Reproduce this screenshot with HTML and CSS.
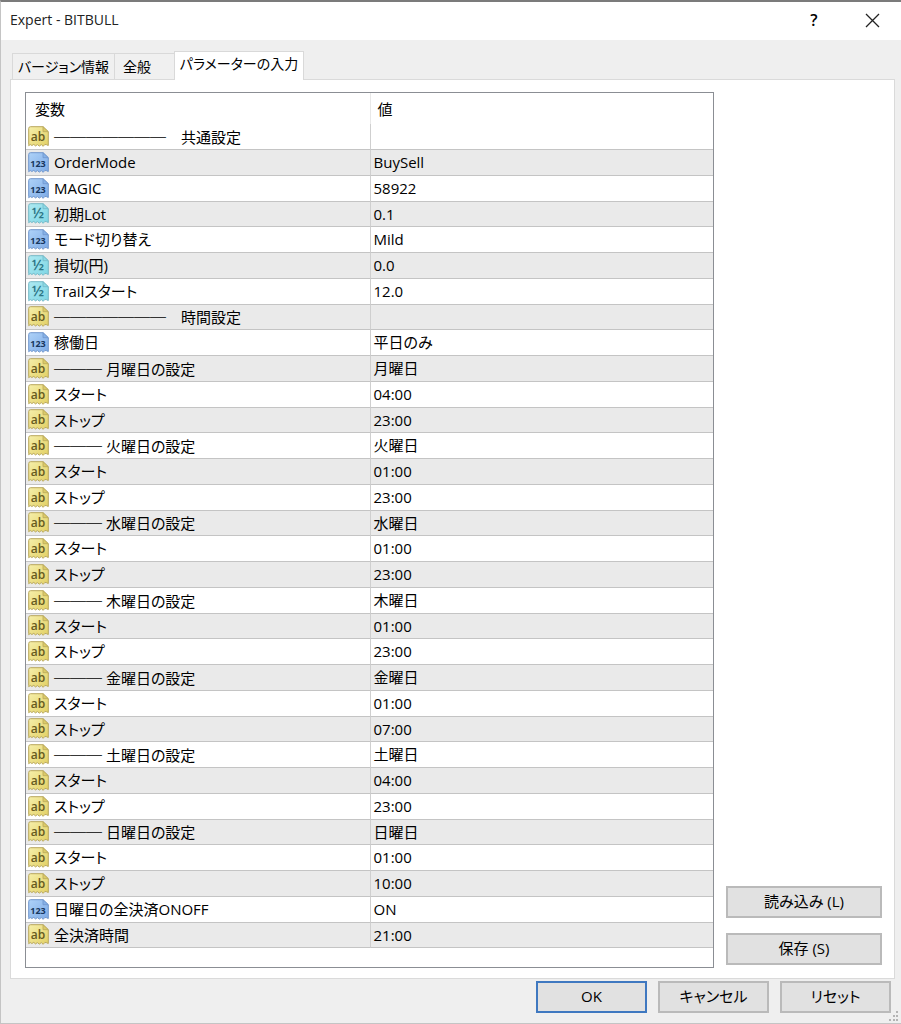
FILE: index.html
```html
<!DOCTYPE html>
<html lang="ja">
<head>
<meta charset="utf-8">
<meta name="viewport" content="width=device-width, initial-scale=1">
<title>Expert - BITBULL</title>
<link rel="stylesheet" href="styles.css">
</head>
<body>
<svg class="defs" aria-hidden="true">
  <defs>
    <linearGradient id="g-ab" x1="0" y1="0" x2="1" y2="1"><stop offset="0" stop-color="#f6efaa"/><stop offset="1" stop-color="#e2d064"/></linearGradient>
    <linearGradient id="g-int" x1="0" y1="0" x2="1" y2="1"><stop offset="0" stop-color="#aed2f8"/><stop offset="1" stop-color="#7eabe6"/></linearGradient>
    <linearGradient id="g-dbl" x1="0" y1="0" x2="1" y2="1"><stop offset="0" stop-color="#aeeaf2"/><stop offset="1" stop-color="#7ed6e4"/></linearGradient>
    <path id="sheet" d="M2.500 .7H15l5.300 5V19.500l-1.800-.8-1.700-.2-1.600 1.800-1.900-1.700-2 1.500-1.900-1.500-1.900 1.300-1.700-1.500-1.900 1.100-1.700-1-1.500 1.200L.7 18.500V2.500Q.7.7 2.500.7Z"/>
  </defs>
</svg>
<main class="dialog">
  <header class="titlebar">
    <h1 class="title">Expert - BITBULL</h1>
    <button class="caption-btn help" type="button" aria-label="ヘルプ">?</button>
    <button class="caption-btn" type="button" aria-label="閉じる">
      <svg width="15" height="15" viewBox="0 0 15 15" fill="none" stroke="#222" stroke-width="1.300"><path d="M1 1l13 13M14 1L1 14"/></svg>
    </button>
  </header>
  <div class="tabs" role="tablist">
    <button class="tab" type="button" role="tab" aria-selected="false">バージョン情報</button>
    <button class="tab tab-general" type="button" role="tab" aria-selected="false">全般</button>
    <button class="tab active" type="button" role="tab" aria-selected="true">パラメーターの入力</button>
  </div>
  <section class="panel" role="tabpanel">
    <div class="list">
      <table class="params">
        <thead><tr><th scope="col">変数</th><th scope="col">値</th></tr></thead>
        <tbody id="rows"></tbody>
      </table>
    </div>
    <div class="side">
      <button class="btn" type="button">読み込み (L)</button>
      <button class="btn" type="button">保存 (S)</button>
    </div>
  </section>
  <footer class="footer">
    <button class="btn primary" type="button">OK</button>
    <button class="btn" type="button">キャンセル</button>
    <button class="btn" type="button">リセット</button>
  </footer>
  <svg class="grip" width="10" height="10" viewBox="0 0 10 10" fill="#b4b4b4" aria-hidden="true"><path d="M7 0h2v2H7zM4 4h2v2H4zM7 4h2v2H7zM0 8h2v2H0zM4 8h2v2H4zM7 8h2v2H7z"/></svg>
</main>
<script src="script.js"></script>
</body>
</html>
```
FILE: styles.css
```css
* { box-sizing: border-box; }

body {
  margin: 0;
  font-family: "Open Sans", "Noto Sans CJK JP", sans-serif;
  font-size: 15px;
  line-height: 20px;
  font-feature-settings: "palt";
  color: #000;
  background: #efefef;
}

button {
  font: inherit;
  font-feature-settings: inherit;
  color: inherit;
  padding: 0;
}

.defs { position: absolute; width: 0; height: 0; }

.dialog {
  position: relative;
  display: flex;
  flex-direction: column;
  min-height: 100vh;
  border: 1px solid #c4c4c4;
  border-top: 2px solid #7b7b7b;
  border-right: 0;
  background: #efefef;
}

.titlebar {
  display: flex;
  align-items: center;
  height: 38px;
  padding: 0 0 2px 9px;
  background: #fff;
}

.title {
  flex: 1;
  margin: 0;
  font-size: 14px;
  font-weight: 400;
  color: #222;
}

.caption-btn {
  display: flex;
  align-items: center;
  justify-content: center;
  width: 58px;
  height: 36px;
  border: 0;
  background: none;
}

.help { font-weight: 600; font-size: 16px; }

.tabs {
  display: flex;
  align-items: flex-end;
  height: 39px;
  padding-left: 11px;
}

.tab {
  width: 102px;
  height: 26px;
  border: 1px solid #d9d9d9;
  border-right: 0;
  border-bottom: 0;
  background: #f0f0f0;
  font-size: 14px;
  white-space: nowrap;
}

.tab-general { width: 60px; padding: 0 8px; text-align: left; }

.tab.active {
  z-index: 1;
  width: 130px;
  height: 29px;
  margin-bottom: -1px;
  padding-bottom: 4px;
  border-right: 1px solid #d9d9d9;
  background: #fff;
}

.panel {
  display: flex;
  gap: 12px;
  flex: 1;
  margin: 0 6px 0 9px;
  padding: 12px 12px 10px 14px;
  border: 1px solid #dadada;
  background: #fff;
}

.list {
  flex: 1;
  padding-bottom: 18px;
  border: 1px solid #8b8e94;
  background: #fff;
}

.params {
  width: 100%;
  border-collapse: separate;
  border-spacing: 0;
  table-layout: fixed;
}

.params th {
  height: 31px;
  padding: 0 9px;
  text-align: left;
  font-weight: 400;
}

.params th + th { border-left: 1px solid #e8e8e8; padding-left: 7px; }

.params td {
  height: 26px;
  padding: 0 3px 1px;
  border-bottom: 1px solid #c4c4c4;
  white-space: pre;
}

.params tr:nth-child(4n) td { height: 25px; }
.params td + td { border-left: 1px solid #cfcfcf; }
.params tbody tr:nth-child(even) { background: #eaeaea; }
.params td:first-child { padding-left: 2px; }

.name {
  display: flex;
  align-items: center;
  gap: 5px;
  height: 23px;
}

.icon { flex: none; width: 21px; height: 21px; }
.icon text { font-family: "Open Sans", sans-serif; text-anchor: middle; }
.dash {
  font-family: "Noto Sans CJK JP", sans-serif;
  font-size: 16px;
  font-weight: 700;
  font-feature-settings: normal;
}

.side {
  display: flex;
  flex-direction: column;
  justify-content: flex-end;
  gap: 15px;
  width: 156px;
  padding-bottom: 3px;
}

.btn {
  height: 32px;
  padding-bottom: 2px;
  border: 2px solid #bababa;
  background: #e1e1e1;
}

.footer {
  display: flex;
  justify-content: flex-end;
  gap: 11px;
  padding: 2px 10px 10px;
}

.footer .btn { width: 111px; }
.footer .primary { border: 2px solid #3f78c0; }

.grip { position: absolute; right: 2px; bottom: 2px; }
```
FILE: script.js
```js
const icons = {
  ab: { edge: '#b8a75c', fold: '#dccb68', ink: '#665a20', text: 'ab', size: 12, weight: 600 },
  int: { edge: '#7096cc', fold: '#86b2e8', ink: '#17375f', text: '123', size: 9, weight: 700 },
  dbl: { edge: '#74b8c6', fold: '#8bdae6', ink: '#2c7585', text: '½', size: 15, weight: 600 }
};

const rows = [
  ['ab', 7, '　共通設定', ''],
  ['int', 0, 'OrderMode', 'BuySell'],
  ['int', 0, 'MAGIC', '58922'],
  ['dbl', 0, '初期Lot', '0.1'],
  ['int', 0, 'モード切り替え', 'Mild'],
  ['dbl', 0, '損切(円)', '0.0'],
  ['dbl', 0, 'Trailスタート', '12.0'],
  ['ab', 7, '　時間設定', ''],
  ['int', 0, '稼働日', '平日のみ']
];

const days = [
  ['月', '04:00', '23:00'], ['火', '01:00', '23:00'], ['水', '01:00', '23:00'],
  ['木', '01:00', '23:00'], ['金', '01:00', '07:00'], ['土', '04:00', '23:00'],
  ['日', '01:00', '10:00']
];
for (const [day, start, stop] of days) {
  rows.push(['ab', 3, ` ${day}曜日の設定`, `${day}曜日`]);
  rows.push(['ab', 0, 'スタート', start]);
  rows.push(['ab', 0, 'ストップ', stop]);
}
rows.push(['int', 0, '日曜日の全決済ONOFF', 'ON'], ['ab', 0, '全決済時間', '21:00']);

function icon(kind) {
  const i = icons[kind];
  return `<svg class="icon" viewBox="0 0 21 21" aria-hidden="true">
    <use href="#sheet" fill="url(#g-${kind})" stroke="${i.edge}"/>
    <path d="M15 .7V5.700H20.300Z" fill="${i.fold}" stroke="${i.edge}" stroke-width=".8"/>
    <text x="10" y="15" font-size="${i.size}" font-weight="${i.weight}" fill="${i.ink}">${i.text}</text></svg>`;
}

document.getElementById('rows').innerHTML = rows.map(([kind, dashes, name, value]) => {
  const rule = dashes ? `<span class="dash">${'─'.repeat(dashes)}</span>` : '';
  return `<tr><td><div class="name">${icon(kind)}<span>${rule}${name}</span></div></td><td>${value}</td></tr>`;
}).join('');
```
